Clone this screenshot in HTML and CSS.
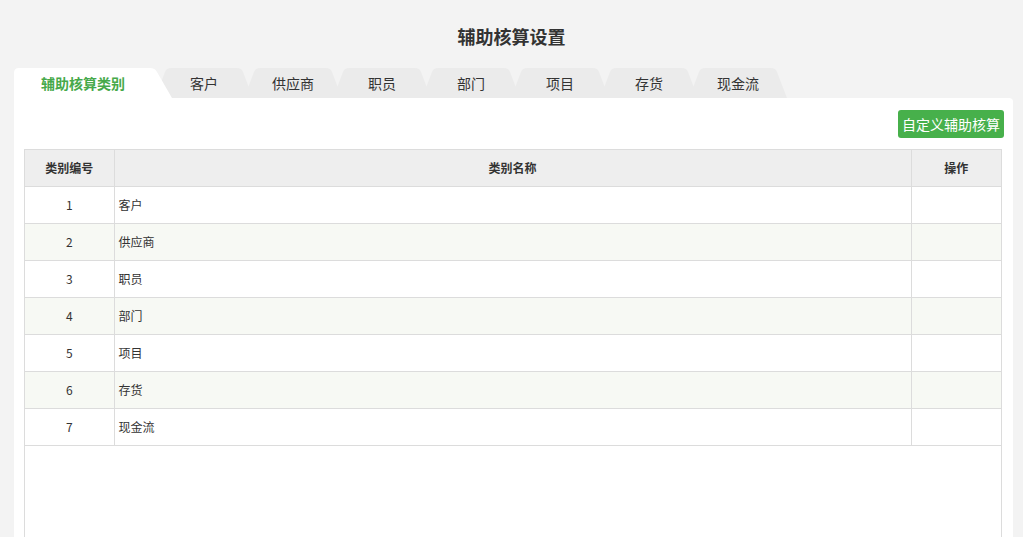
FILE: index.html
```html
<!DOCTYPE html>
<html lang="zh-CN">
<head>
<meta charset="utf-8">
<title>辅助核算设置</title>
<link rel="stylesheet" href="styles.css">
</head>
<body>
<div class="page">
  <h1 class="title">辅助核算设置</h1>
  <div class="tabs">
    <div class="tab tab-active">辅助核算类别</div>
    <div class="tab tab-first">客户</div>
    <div class="tab">供应商</div>
    <div class="tab">职员</div>
    <div class="tab">部门</div>
    <div class="tab">项目</div>
    <div class="tab">存货</div>
    <div class="tab">现金流</div>
  </div>
  <div class="panel">
    <div class="toolbar">
      <button class="btn-green">自定义辅助核算</button>
    </div>
    <div class="grid">
      <table class="table">
        <colgroup>
          <col class="c-no">
          <col class="c-name">
          <col class="c-op">
        </colgroup>
        <thead>
          <tr><th>类别编号</th><th>类别名称</th><th>操作</th></tr>
        </thead>
        <tbody>
          <tr><td class="center">1</td><td>客户</td><td></td></tr>
          <tr class="alt"><td class="center">2</td><td>供应商</td><td></td></tr>
          <tr><td class="center">3</td><td>职员</td><td></td></tr>
          <tr class="alt"><td class="center">4</td><td>部门</td><td></td></tr>
          <tr><td class="center">5</td><td>项目</td><td></td></tr>
          <tr class="alt"><td class="center">6</td><td>存货</td><td></td></tr>
          <tr><td class="center">7</td><td>现金流</td><td></td></tr>
        </tbody>
      </table>
    </div>
  </div>
</div>
</body>
</html>
```
FILE: styles.css
```css
* { box-sizing: border-box; }
html, body {
  margin: 0;
  padding: 0;
  background: #f3f3f3;
  font-family: "Noto Sans CJK SC", "Microsoft YaHei", sans-serif;
  color: #333;
  overflow: hidden;
}
.page {
  height: 537px;
  display: flex;
  flex-direction: column;
}
.title {
  margin: 0;
  padding-top: 23px;
  height: 68px;
  font-size: 18px;
  line-height: 26px;
  font-weight: bold;
  text-align: center;
  color: #333;
}
.tabs {
  display: flex;
  height: 30px;
  margin-left: 14px;
}
.tab {
  width: 98px;
  height: 30px;
  margin-left: -9px;
  background: #ebebeb;
  clip-path: path('M0 30 L10 4 Q11.5 0 16 0 L82 0 Q86.5 0 88 4 L98 30 Z');
  font-size: 14px;
  line-height: 30px;
  text-align: center;
  color: #333;
}
.tab-first { margin-left: -17px; }
.tab-active {
  width: 158px;
  margin-left: 0;
  padding-right: 20px;
  background: #fff;
  color: #46a94a;
  font-weight: bold;
  clip-path: path('M0 30 L0 5 Q0 0 5 0 L136 0 Q141 0 143 4 L158 30 Z');
  position: relative;
  z-index: 2;
}
.panel {
  flex: 1;
  margin: 0 10px 0 14px;
  background: #fff;
  border-radius: 0 4px 0 0;
  padding: 12px 10px 0 10px;
  display: flex;
  flex-direction: column;
}
.toolbar {
  display: flex;
  justify-content: flex-end;
  margin-bottom: 11px;
  margin-right: -1px;
}
.btn-green {
  height: 28px;
  width: 106px;
  padding: 0;
  border: none;
  border-radius: 3px;
  background: #47b04b;
  color: #fff;
  font-family: inherit;
  font-size: 14px;
  line-height: 28px;
}
.grid {
  flex: 1;
  border: 1px solid #dcdcdc;
  border-bottom: none;
  margin-right: 1px;
}
.table {
  width: 100%;
  border-collapse: collapse;
  table-layout: fixed;
  font-size: 12px;
}
.c-no { width: 89px; }
.c-op { width: 90px; }
.table th {
  height: 36px;
  background: #eeeeee;
  font-weight: bold;
  color: #333;
  border-bottom: 1px solid #dcdcdc;
  border-right: 1px solid #dcdcdc;
  padding: 0;
}
.table td {
  height: 37px;
  border-bottom: 1px solid #dcdcdc;
  border-right: 1px solid #dcdcdc;
  padding: 0 4px;
  color: #333;
}
.table th:last-child, .table td:last-child { border-right: none; }
.table td.center { text-align: center; }
.table tr.alt td { background: #f7f9f4; }
```
